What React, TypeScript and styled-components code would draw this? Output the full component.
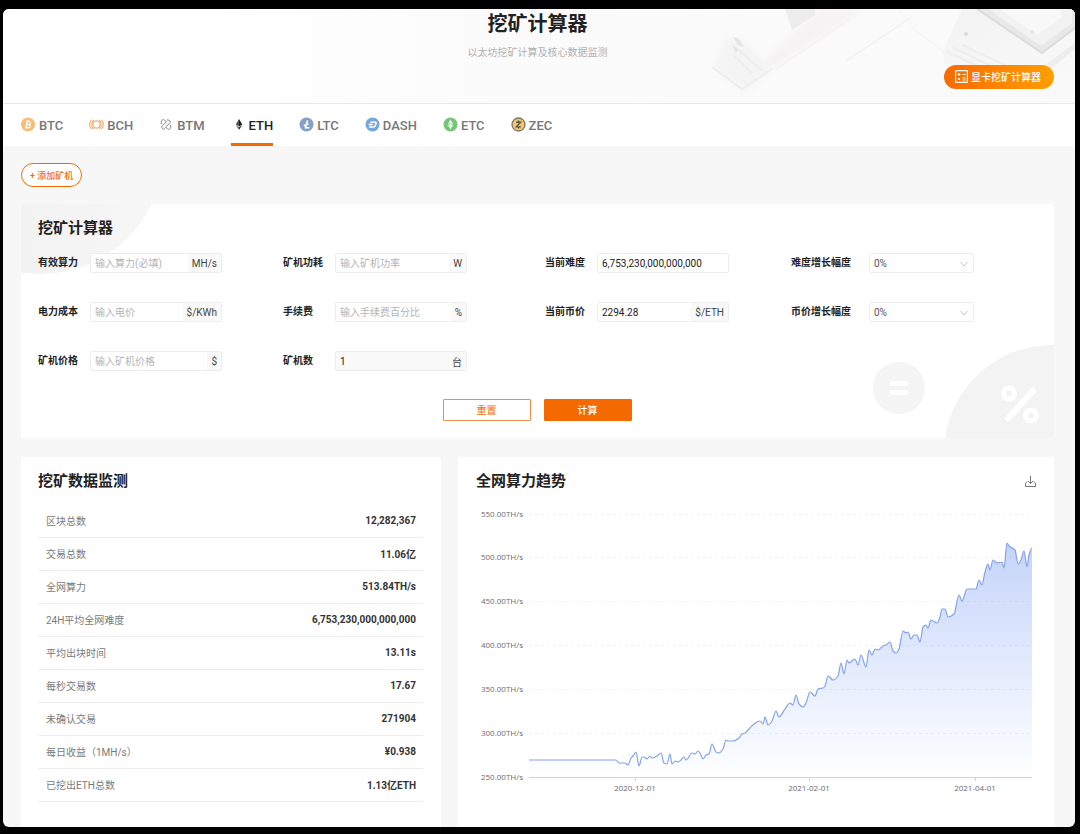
import React from "react";
import styled, { createGlobalStyle } from "styled-components";

const accent = "#f56a00";

const GlobalStyle = createGlobalStyle`
  *, *::before, *::after { box-sizing: border-box; }
  body {
    margin: 0;
    background: #000;
    font-family: Roboto, "Noto Sans CJK SC", sans-serif;
    font-size: 10px;
    color: #222;
  }
  button, input, select { font: inherit; color: inherit; }
  h1, h2 { margin: 0; }
  a { text-decoration: none; color: inherit; }
`;

const Frame = styled.div`
  padding: 9px 5px 7px 3px;
`;

const Page = styled.main`
  background: #f7f7f7;
  border-radius: 6px;
  overflow: hidden;
`;

/* ---------- hero ---------- */

const Hero = styled.header`
  position: relative;
  display: flex;
  flex-direction: column;
  align-items: center;
  padding: 0 21px 14px 18px;
  border-bottom: 1px solid #e8e8e8;
  background: linear-gradient(90deg, #fff 20%, #fcfbfc 45%, #fbfafb 100%);
`;

const HeroArt = styled.svg`
  position: absolute;
  top: 0;
  right: 0;
`;

const HeroTitle = styled.h1`
  position: relative;
  font-size: 20px;
  line-height: 30px;
  font-weight: 700;
`;

const HeroSub = styled.p`
  position: relative;
  margin: 6px 0 4px;
  line-height: 16px;
  color: #b0b0b0;
`;

const GpuLink = styled.a`
  position: relative;
  align-self: flex-end;
  display: flex;
  align-items: center;
  gap: 3px;
  height: 24px;
  padding: 0 13px 2px 11px;
  border-radius: 12px;
  color: #fff;
  font-weight: 500;
  background: linear-gradient(90deg, #f76b00, #ff9f00);
`;

/* ---------- coin tabs ---------- */

const Tabs = styled.nav`
  display: flex;
  gap: 26px;
  height: 42px;
  padding: 0 18px;
  background: #fff;
`;

const Tab = styled.a<{ $active?: boolean }>`
  display: flex;
  align-items: center;
  gap: 3px;
  font-size: 13px;
  font-weight: 500;
  color: ${(p) => (p.$active ? "#222" : "#777")};
  border-top: 3px solid transparent;
  border-bottom: 3px solid ${(p) => (p.$active ? accent : "transparent")};

  svg { flex: none; margin-bottom: 2px; }
`;

/* ---------- panels ---------- */

const Content = styled.div`
  padding: 17px 21px 0 18px;
`;

const AddButton = styled.button`
  display: block;
  height: 24px;
  padding: 0 8px;
  border: 1px solid ${accent};
  border-radius: 12px;
  background: #fff;
  color: ${accent};
  font-size: 9px;
  font-weight: 500;
`;

const Panel = styled.section`
  position: relative;
  overflow: hidden;
  background: #fff;
  border-radius: 2px;
  padding: 14px 18px 17px 17px;
`;

const Calculator = styled(Panel)`
  margin: 17px 0 19px;
`;

const PanelTitle = styled.h2`
  position: relative;
  font-size: 15px;
  line-height: 20px;
  font-weight: 700;
`;

const CornerArt = styled.svg<{ $side: "start" | "end" }>`
  position: absolute;
  ${(p) => (p.$side === "start" ? "top: 0; left: 0;" : "bottom: 0; right: 0;")}
`;

const Fields = styled.form`
  position: relative;
  display: grid;
  grid-template-columns: 245fr 262fr 246fr 245fr;
  grid-auto-rows: 20px;
  row-gap: 29px;
  margin-top: 15px;
`;

const FieldRow = styled.div`
  display: flex;
  align-items: center;
  min-width: 0;
`;

const FieldLabel = styled.label<{ $wide?: boolean }>`
  flex: none;
  width: ${(p) => (p.$wide ? 78 : 52)}px;
  font-weight: 700;
  line-height: 16px;
  white-space: nowrap;
`;

const InputBox = styled.div<{ $muted?: boolean }>`
  display: flex;
  width: 132px;
  height: 20px;
  border: 1px solid #ededed;
  border-radius: 2px;
  background: ${(p) => (p.$muted ? "#f9f9f9" : "#fff")};
`;

const TextInput = styled.input`
  flex: 1;
  min-width: 0;
  padding: 0 4px;
  border: 0;
  outline: 0;
  background: transparent;

  &::placeholder { color: #b4b4b4; opacity: 1; }
`;

const Unit = styled.span`
  display: flex;
  align-items: center;
  padding: 0 4px;
  background: #f9f9f9;
  color: #444;
`;

const SelectBox = styled.div`
  position: relative;
  width: 105px;
  height: 20px;

  svg {
    position: absolute;
    right: 6px;
    top: 8px;
    pointer-events: none;
  }
`;

const Select = styled.select`
  appearance: none;
  width: 100%;
  height: 100%;
  padding: 0 4px;
  border: 1px solid #ededed;
  border-radius: 2px;
  background: #fff;
  color: #555;
`;

const Actions = styled.div`
  position: relative;
  display: flex;
  justify-content: center;
  gap: 13px;
  margin-top: 28px;
`;

const ActionButton = styled.button<{ $primary?: boolean }>`
  width: 88px;
  height: 22px;
  padding: 0 0 2px;
  border: 1px solid ${(p) => (p.$primary ? accent : "#f0904a")};
  border-radius: 1px;
  background: ${(p) => (p.$primary ? accent : "#fff")};
  color: ${(p) => (p.$primary ? "#fff" : accent)};
  font-weight: ${(p) => (p.$primary ? 500 : 400)};
`;

const Columns = styled.div`
  display: grid;
  grid-template-columns: minmax(0, 420fr) minmax(0, 596fr);
  gap: 17px;
`;

const Card = styled(Panel)`
  padding-bottom: 25px;
  border-radius: 2px 2px 0 0;
`;

const ChartCard = styled(Card)`
  padding: 14px 18px 25px;
`;

const CardHead = styled.div`
  display: flex;
  justify-content: space-between;
  align-items: center;
`;

const IconButton = styled.button`
  display: flex;
  padding: 0;
  border: 0;
  background: none;
  color: #777;
`;

const Stats = styled.table`
  width: 100%;
  margin-top: 14px;
  border-collapse: separate;
  border-spacing: 0;

  th, td {
    height: 33px;
    padding: 0 7px 2px 8px;
    border-bottom: 1px solid #ededed;
  }
  th { text-align: left; font-weight: 400; color: #7a7a7a; }
  td { text-align: right; font-weight: 700; color: #333; }
`;

const Chart = styled.svg`
  display: block;
  width: 100%;
  margin-top: 9px;

  text {
    font-family: "Open Sans", "Noto Sans", sans-serif;
    font-size: 8px;
    fill: #6c6c6c;
  }
`;

/* ---------- coin marks ---------- */

const Coin = ({ children }: { children: React.ReactNode }) => (
  <svg width="15" height="15" viewBox="0 0 15 15" fill="none" aria-hidden="true">
    {children}
  </svg>
);

const coins = [
  {
    name: "BTC",
    icon: (
      <Coin>
        <circle cx="7" cy="7.5" r="7" fill="#f6bd78" />
        <g stroke="#fff" strokeWidth="1.2" transform="rotate(12 7 7.5)">
          <path d="M5.6 4.4v6.2M4.6 4.5h3.2a1.4 1.4 0 0 1 0 2.9H5.6M7.8 7.4a1.6 1.6 0 0 1 0 3.2H4.6" />
          <path d="M6.1 3v1.4M7.7 3v1.4M6.1 10.6V12M7.7 10.6V12" strokeWidth="0.9" />
        </g>
      </Coin>
    ),
  },
  {
    name: "BCH",
    icon: (
      <Coin>
        <g stroke="#f3b26a" strokeWidth="1.2">
          <circle cx="7.5" cy="7.5" r="3.6" />
          <path d="M2.6 3C0 5.4 0 9.600 2.600 12M4.700 3C2.300 5.400 2.300 9.600 4.700 12" />
          <path d="M12.400 3c2.600 2.400 2.600 6.600 0 9M10.300 3c2.400 2.400 2.400 6.600 0 9" />
        </g>
      </Coin>
    ),
  },
  {
    name: "BTM",
    icon: (
      <Coin>
        <g stroke="#858585" strokeWidth="1">
          <path d="M2.300 7V4.600A2 2 0 0 1 5.600 3.200L7.400 5 3.400 8.600A2 2 0 0 0 4.600 12H6.200" />
          <path d="M11.700 8v2.400a2 2 0 0 1-3.300 1.400L6.600 10 10.600 6.400A2 2 0 0 0 9.400 3H7.800" />
        </g>
      </Coin>
    ),
  },
  {
    name: "ETH",
    active: true,
    icon: (
      <Coin>
        <path d="M8 2L4.700 7.500 8 9.400z" fill="#555" />
        <path d="M8 2L11.300 7.500 8 9.400z" fill="#1d1d1d" />
        <path d="M4.700 8.200L8 12.800V10.200z" fill="#666" />
        <path d="M11.300 8.200L8 12.800V10.200z" fill="#222" />
      </Coin>
    ),
  },
  {
    name: "LTC",
    icon: (
      <Coin>
        <circle cx="7.500" cy="7.500" r="7" fill="#84a0c8" />
        <path d="M8.500 3.400L6.500 10.800H10.500M4.800 8.700L9.500 6.700" stroke="#fff" strokeWidth="1.600" />
      </Coin>
    ),
  },
  {
    name: "DASH",
    icon: (
      <Coin>
        <circle cx="7.500" cy="7.500" r="7" fill="#74a7e0" />
        <path
          d="M5.400 5.200h4.800q1.200 0 .9 1.200l-.7 2.200q-.4 1.300-1.700 1.300H4M3.600 7.500h4"
          stroke="#fff"
          strokeWidth="1.500"
        />
      </Coin>
    ),
  },
  {
    name: "ETC",
    icon: (
      <Coin>
        <circle cx="7.500" cy="7.500" r="7" fill="#76c679" />
        <path d="M7.500 2.600L4.900 7.300 7.500 6.200 10.100 7.300z" fill="#fff" />
        <path d="M7.500 6.800L4.900 7.900 7.500 12.400 10.100 7.900z" fill="#e4f6e5" />
      </Coin>
    ),
  },
  {
    name: "ZEC",
    icon: (
      <Coin>
        <circle cx="7.500" cy="7.500" r="6.500" fill="#f2c66c" stroke="#7d756c" strokeWidth="1.300" />
        <path
          d="M5.200 5.200H9.600L5.400 9.900H9.900M7.500 3.500V5.200M7.500 9.900V11.500"
          stroke="#5e5348"
          strokeWidth="1.400"
        />
      </Coin>
    ),
  },
];

/* ---------- form data ---------- */

type FieldSpec = {
  id: string;
  label: string;
  unit?: string;
  placeholder?: string;
  value?: string;
  muted?: boolean;
  select?: boolean;
};

const fields: FieldSpec[] = [
  { id: "hashrate", label: "有效算力", placeholder: "输入算力(必填)", unit: "MH/s" },
  { id: "power", label: "矿机功耗", placeholder: "输入矿机功率", unit: "W" },
  { id: "difficulty", label: "当前难度", value: "6,753,230,000,000,000" },
  { id: "difficulty-growth", label: "难度增长幅度", select: true },
  { id: "electricity", label: "电力成本", placeholder: "输入电价", unit: "$/KWh" },
  { id: "fee", label: "手续费", placeholder: "输入手续费百分比", unit: "%" },
  { id: "price", label: "当前币价", value: "2294.28", unit: "$/ETH" },
  { id: "price-growth", label: "币价增长幅度", select: true },
  { id: "miner-price", label: "矿机价格", placeholder: "输入矿机价格", unit: "$" },
  { id: "miner-count", label: "矿机数", value: "1", unit: "台", muted: true },
];

const Field = ({ id, label, unit, placeholder, value, muted, select }: FieldSpec) => (
  <FieldRow>
    <FieldLabel htmlFor={id} $wide={select}>
      {label}
    </FieldLabel>
    {select ? (
      <SelectBox>
        <Select id={id} defaultValue="0">
          <option value="0">0%</option>
        </Select>
        <svg width="8" height="6" viewBox="0 0 8 6" fill="none" stroke="#c4c4c4" aria-hidden="true">
          <path d="M0.500 1L4 5 7.500 1" />
        </svg>
      </SelectBox>
    ) : (
      <InputBox $muted={muted}>
        <TextInput id={id} placeholder={placeholder} defaultValue={value} />
        {unit && <Unit>{unit}</Unit>}
      </InputBox>
    )}
  </FieldRow>
);

const stats = [
  ["区块总数", "12,282,367"],
  ["交易总数", "11.06亿"],
  ["全网算力", "513.84TH/s"],
  ["24H平均全网难度", "6,753,230,000,000,000"],
  ["平均出块时间", "13.11s"],
  ["每秒交易数", "17.67"],
  ["未确认交易", "271904"],
  ["每日收益（1MH/s）", "¥0.938"],
  ["已挖出ETH总数", "1.13亿ETH"],
];

/* ---------- hashrate chart ---------- */

const series: [number, number][] = [
  [53, 260], [140, 260], [143, 263], [149, 263], [152, 265], [155, 258], [157, 256], [160, 252],
  [163, 266], [166, 257], [168, 257], [171, 259], [174, 256], [176, 258], [181, 256], [185, 253],
  [188, 263], [191, 264], [194, 254], [196, 264], [199, 261], [202, 262], [205, 260], [208, 257],
  [210, 260], [216, 253], [219, 254], [222, 251], [224, 253], [227, 259], [230, 255], [233, 254],
  [236, 244], [240, 252], [243, 253], [247, 249], [250, 240], [252, 241], [257, 241], [263, 238],
  [266, 234], [269, 233], [273, 229], [278, 224], [284, 221], [287, 224], [289, 217], [292, 225],
  [296, 221], [300, 211], [303, 217], [309, 209], [314, 203], [317, 205], [320, 195], [323, 204],
  [327, 207], [330, 203], [334, 192], [339, 196], [342, 189], [347, 188], [349, 186], [352, 176],
  [357, 180], [362, 176], [365, 163], [368, 174], [371, 160], [373, 163], [379, 159], [382, 165],
  [385, 155], [390, 167], [393, 150], [396, 155], [399, 149], [402, 150], [407, 146], [410, 145],
  [414, 142], [417, 151], [420, 153], [423, 149], [427, 131], [430, 133], [432, 132], [435, 139],
  [438, 135], [441, 135], [444, 142], [447, 127], [450, 125], [452, 128], [455, 120], [461, 123],
  [464, 117], [466, 109], [469, 109], [472, 117], [478, 114], [483, 95], [486, 101], [491, 89],
  [495, 89], [500, 89], [503, 80], [506, 85], [509, 72], [512, 64], [514, 70], [517, 60],
  [521, 63], [526, 62], [528, 68], [531, 43], [533, 46], [539, 50], [542, 64], [545, 60],
  [548, 51], [551, 67], [553, 55], [556, 48],
];

// Smooth curve whose tangent is level at every peak and valley.
const smooth = (pts: [number, number][]) => {
  const slope = pts.map((p, i) => {
    if (i === 0 || i === pts.length - 1) return 0;
    const a = (p[1] - pts[i - 1][1]) / (p[0] - pts[i - 1][0]);
    const b = (pts[i + 1][1] - p[1]) / (pts[i + 1][0] - p[0]);
    return a * b <= 0 ? 0 : (2 * a * b) / (a + b);
  });
  return pts.reduce((d, [x, y], i) => {
    if (i === 0) return `M${x} ${y}`;
    const [px, py] = pts[i - 1];
    const h = (x - px) / 3;
    return `${d}C${px + h} ${py + slope[i - 1] * h} ${x - h} ${y - slope[i] * h} ${x} ${y}`;
  }, "");
};

const linePath = smooth(series);
const yTicks = [550, 500, 450, 400, 350, 300, 250];
const xTicks: [number, string][] = [
  [159, "2020-12-01"],
  [333, "2021-02-01"],
  [499, "2021-04-01"],
];

const HashrateChart = () => (
  <Chart viewBox="0 0 560 300" role="img" aria-label="全网算力趋势">
    <defs>
      <linearGradient id="area" x1="0" y1="0" x2="0" y2="1">
        <stop offset="0" stopColor="#5b87f0" stopOpacity="0.36" />
        <stop offset="1" stopColor="#5b87f0" stopOpacity="0" />
      </linearGradient>
    </defs>
    {yTicks.map((t, i) => {
      const y = 14 + Math.floor(i * 43.900);
      return (
        <g key={t}>
          <text x="47" y={y + 3} textAnchor="end">{`${t}.00TH/s`}</text>
          {t !== 250 && (
            <path d={`M53 ${y + 0.500}H556`} stroke="#f2f2f2" strokeDasharray="3 3" />
          )}
        </g>
      );
    })}
    <path d={`${linePath}V277H53Z`} fill="url(#area)" />
    <path d={linePath} fill="none" stroke="#84a3e8" strokeWidth="1.200" />
    <path d="M53 277.500H556" stroke="#d4d4d4" />
    {xTicks.map(([x, label]) => (
      <g key={label}>
        <path d={`M${x}.500 278v3`} stroke="#d4d4d4" />
        <text x={x} y="291" textAnchor="middle">
          {label}
        </text>
      </g>
    ))}
  </Chart>
);

const DeskArt = () => (
  <HeroArt width="375" height="94" viewBox="0 0 375 94" aria-hidden="true">
    <defs>
      <filter id="soft" x="-20%" y="-20%" width="140%" height="140%">
        <feGaussianBlur stdDeviation="3" />
      </filter>
      <linearGradient id="slab" x1="0" y1="0" x2="0.400" y2="1">
        <stop offset="0" stopColor="#f3f2f3" />
        <stop offset="1" stopColor="#faf9fa" />
      </linearGradient>
    </defs>
    <g filter="url(#soft)">
      <path d="M24 30L40 28 72 60 46 84 14 60z" fill="#f5f4f5" />
      <path d="M118 0H166L72 60 62 54z" fill="#f5f3f4" />
    </g>
    <path d="M33 28L39 30 44 38 38 36zM32 36L38 40 36 44z" fill="#e4e4e5" />
    <path d="M38 40L62 62M34 46L52 64M12 58L42 80 72 60" fill="none" stroke="#efeeef" strokeWidth="2" />
    <path d="M68 54L118 20M76 60L150 10M146 52L212 8" stroke="#f4f2f3" strokeWidth="2" />
    <path d="M85 0H115V6L92 21z" fill="#ededee" />
    <path d="M262 0H375V92L330 88 244 54 243 42z" fill="url(#slab)" />
    <path d="M210 17L243 42M212 15L198 0" stroke="#f4f2f3" />
    <path d="M246 42L300 68M252 38L310 66M262 36L322 64" stroke="#efeeef" strokeWidth="2" />
    <path d="M277 0L342 44 375 19V0z" fill="#e8e8e9" />
    <path d="M288 0L341 37 372 14V0z" fill="#f2f2f2" />
    <path d="M300 0L337 26 362 8 360 0z" fill="#f8f8f8" />
    <path d="M277 0L342 44 375 19" fill="none" stroke="#dcdcdd" strokeWidth="2" />
    <path d="M342 58L375 34V40L348 62z" fill="#eeedee" />
    <circle cx="266" cy="25" r="2" fill="#dcdcdc" />
    <circle cx="332" cy="23" r="2" fill="#e6e6e6" />
  </HeroArt>
);

export default function App() {
  return (
    <Frame>
      <GlobalStyle />
      <Page>
        <Hero>
          <DeskArt />
          <HeroTitle>挖矿计算器</HeroTitle>
          <HeroSub>以太坊挖矿计算及核心数据监测</HeroSub>
          <GpuLink href="#gpu">
            <svg width="13" height="13" viewBox="0 0 13 13" fill="none" stroke="#fff" aria-hidden="true">
              <rect x="0.600" y="0.600" width="11.800" height="11.800" rx="0.600" strokeWidth="1.200" />
              <path d="M2.500 4.500H5.500M4 3V6M7.500 4.500H10.500M3 7.900L5 9.900M5 7.900L3 9.900M7.500 8H10.500M7.500 10H10.500" />
            </svg>
            显卡挖矿计算器
          </GpuLink>
        </Hero>

        <Tabs>
          {coins.map((c) => (
            <Tab key={c.name} href={`#${c.name}`} $active={c.active}>
              {c.icon}
              {c.name}
            </Tab>
          ))}
        </Tabs>

        <Content>
          <AddButton type="button">+ 添加矿机</AddButton>

          <Calculator>
            <CornerArt $side="start" width="133" height="72" viewBox="0 0 133 72" aria-hidden="true">
              <defs>
                <linearGradient id="corner" x1="0" y1="0" x2="1" y2="0">
                  <stop offset="0.300" stopColor="#f1f1f1" />
                  <stop offset="1" stopColor="#f7f7f7" />
                </linearGradient>
              </defs>
              <circle cx="19" cy="-54" r="124" fill="url(#corner)" />
            </CornerArt>
            <CornerArt $side="end" width="185" height="94" viewBox="0 0 185 94" aria-hidden="true">
              <circle cx="183" cy="109" r="108" fill="#f3f3f3" />
              <circle cx="30" cy="44" r="26" fill="#f4f4f4" />
              <g stroke="#fff" strokeLinecap="round" fill="none">
                <path d="M23 39.500H37M23 48.500H37" strokeWidth="5" />
                <circle cx="140" cy="49.500" r="5.500" strokeWidth="5" />
                <circle cx="162" cy="71.500" r="5.500" strokeWidth="5" />
                <path d="M139 74.500L164 47" strokeWidth="6" />
              </g>
            </CornerArt>
            <PanelTitle>挖矿计算器</PanelTitle>
            <Fields id="calculator">
              {fields.map((f) => (
                <Field key={f.id} {...f} />
              ))}
            </Fields>
            <Actions>
              <ActionButton type="reset" form="calculator">
                重置
              </ActionButton>
              <ActionButton type="button" $primary>
                计算
              </ActionButton>
            </Actions>
          </Calculator>

          <Columns>
            <Card>
              <PanelTitle>挖矿数据监测</PanelTitle>
              <Stats>
                <tbody>
                  {stats.map(([label, value]) => (
                    <tr key={label}>
                      <th scope="row">{label}</th>
                      <td>{value}</td>
                    </tr>
                  ))}
                </tbody>
              </Stats>
            </Card>
            <ChartCard>
              <CardHead>
                <PanelTitle>全网算力趋势</PanelTitle>
                <IconButton type="button" aria-label="下载">
                  <svg width="12" height="12" viewBox="0 0 12 12" fill="none" stroke="currentColor" aria-hidden="true">
                    <path d="M6.500 1V8.500M4 6L6.500 8.500 9 6" />
                    <path d="M3 6.500L1.500 8.500V11.500H11.500V8.500L10 6.500" />
                  </svg>
                </IconButton>
              </CardHead>
              <HashrateChart />
            </ChartCard>
          </Columns>
        </Content>
      </Page>
    </Frame>
  );
}
